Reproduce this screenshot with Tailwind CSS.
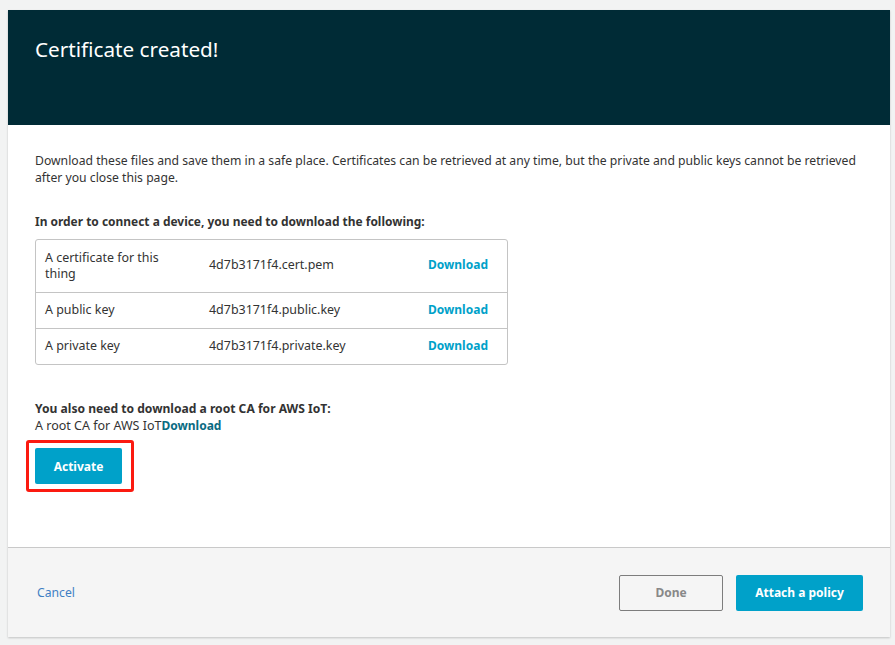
<!DOCTYPE html>
<html lang="en">
<head>
    <meta charset="utf-8">
    <title>Certificate created</title>
    <script src="https://cdn.jsdelivr.net/npm/@tailwindcss/browser@4"></script>
</head>
<body class="h-[645px] overflow-hidden bg-[#f2f3f3] pt-[10px] pl-[8px] pr-[5px] font-['Noto_Sans',sans-serif] text-[12.2px] leading-[17px] text-[#333]">
    <main class="h-[627px] flex flex-col bg-white shadow-[0_1px_2px_rgba(0,0,0,0.2)]">
        <header class="h-[115px] shrink-0 bg-[#002b36] pl-[27px] pt-[25px]">
            <h1 class="text-[20.7px] leading-[28px] text-white">Certificate created!</h1>
        </header>

        <section class="flex-1 pl-[27px] pr-[27px] pt-[27px]">
            <p>Download these files and save them in a safe place. Certificates can be retrieved at any time, but the private and public keys cannot be retrieved after you close this page.</p>
            <p class="mt-[27px] text-[11.95px] font-bold">In order to connect a device, you need to download the following:</p>

            <div class="mt-[9px] w-[473px] rounded-[3px] border border-[#c4c4c4] text-[12.45px]">
                <div class="h-[53px] flex items-center border-b border-[#c4c4c4] pb-[3px] pl-[9px]">
                    <div class="mt-[3px] w-[164px] pr-[30px] leading-[16px]">A certificate for this thing</div>
                    <div class="w-[219px]">4d7b3171f4.cert.pem</div>
                    <a class="text-[12px] font-bold text-[#00a1c9]">Download</a>
                </div>
                <div class="h-[36px] flex items-center border-b border-[#c4c4c4] pb-[2px] pl-[9px]">
                    <div class="w-[164px]">A public key</div>
                    <div class="w-[219px]">4d7b3171f4.public.key</div>
                    <a class="text-[12px] font-bold text-[#00a1c9]">Download</a>
                </div>
                <div class="h-[35px] flex items-center pb-[2px] pl-[9px]">
                    <div class="w-[164px]">A private key</div>
                    <div class="w-[219px]">4d7b3171f4.private.key</div>
                    <a class="text-[12px] font-bold text-[#00a1c9]">Download</a>
                </div>
            </div>

            <p class="mt-[35px] text-[12.1px] font-bold">You also need to download a root CA for AWS IoT:</p>
            <p class="text-[12.5px]">A root CA for AWS IoT<a class="text-[12px] font-bold text-[#0a6b82]">Download</a></p>

            <div class="relative mt-[14px] w-[87px]">
                <button class="h-[36px] w-[87px] rounded-[2px] bg-[#00a1c9] text-[12px] font-bold text-white">Activate</button>
                <div class="absolute -left-[9px] -top-[8px] h-[52px] w-[108px] rounded-[3px] border-[3px] border-[#fb1a10]"></div>
            </div>
        </section>

        <footer class="h-[90px] shrink-0 flex items-center justify-between border-t border-[#c9c9c9] bg-[#f5f5f5] pl-[29px] pr-[27px]">
            <a class="text-[#3f7fc4]">Cancel</a>
            <div class="flex gap-[13px]">
                <button class="h-[36px] w-[104px] rounded-[2px] border border-[#7d7d7d] text-[12px] font-bold text-[#888]">Done</button>
                <button class="h-[36px] w-[127px] rounded-[2px] bg-[#00a1c9] text-[12px] font-bold text-white">Attach a policy</button>
            </div>
        </footer>
    </main>
</body>
</html>
